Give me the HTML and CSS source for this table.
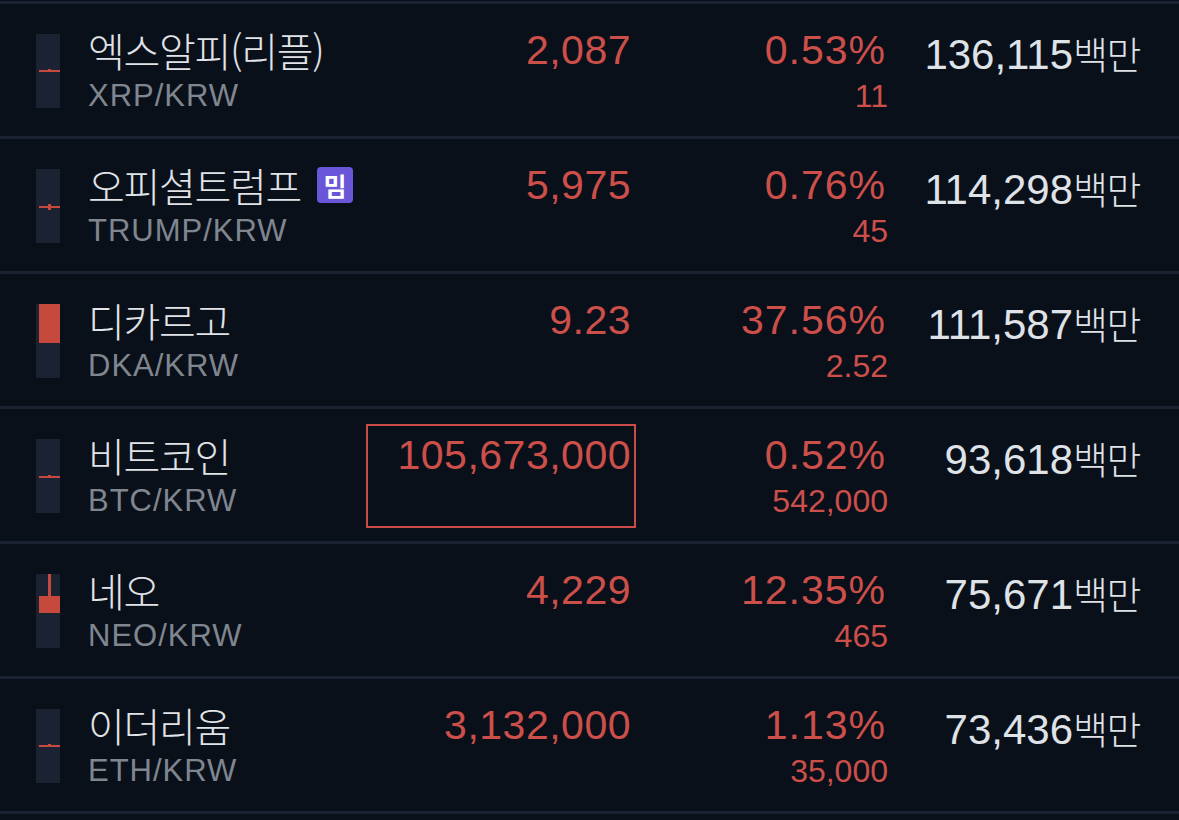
FILE: index.html
```html
<!DOCTYPE html>
<html lang="ko">
<head>
<meta charset="utf-8">
<title>KRW 마켓</title>
<link rel="stylesheet" href="styles.css">
</head>
<body>
<div class="list">
  <div class="row">
    <div class="candle"><svg width="24" height="74" viewBox="0 0 24 74"><rect x="3" y="36" width="21" height="2"/><rect x="12" y="35" width="3" height="1"/></svg></div>
    <div class="coin">
      <div class="name">엑스알피(리플)</div>
      <div class="pair">XRP/KRW</div>
    </div>
    <div class="price">2,087</div>
    <div class="change">
      <div class="pct">0.53%</div>
      <div class="diff">11</div>
    </div>
    <div class="volume">136,115<span class="unit">백만</span></div>
  </div>
  <div class="row">
    <div class="candle"><svg width="24" height="74" viewBox="0 0 24 74"><rect x="3" y="37" width="21" height="2"/><rect x="12" y="35" width="3" height="6"/></svg></div>
    <div class="coin">
      <div class="name">오피셜트럼프<span class="badge">밈</span></div>
      <div class="pair">TRUMP/KRW</div>
    </div>
    <div class="price">5,975</div>
    <div class="change">
      <div class="pct">0.76%</div>
      <div class="diff">45</div>
    </div>
    <div class="volume">114,298<span class="unit">백만</span></div>
  </div>
  <div class="row">
    <div class="candle"><svg width="24" height="74" viewBox="0 0 24 74"><rect x="3" y="0" width="21" height="39"/></svg></div>
    <div class="coin">
      <div class="name">디카르고</div>
      <div class="pair">DKA/KRW</div>
    </div>
    <div class="price">9.23</div>
    <div class="change">
      <div class="pct">37.56%</div>
      <div class="diff">2.52</div>
    </div>
    <div class="volume">111,587<span class="unit">백만</span></div>
  </div>
  <div class="row">
    <div class="candle"><svg width="24" height="74" viewBox="0 0 24 74"><rect x="3" y="37" width="21" height="2"/><rect x="12" y="36" width="3" height="1"/></svg></div>
    <div class="coin">
      <div class="name">비트코인</div>
      <div class="pair">BTC/KRW</div>
    </div>
    <div class="price price-active">105,673,000</div>
    <div class="change">
      <div class="pct">0.52%</div>
      <div class="diff">542,000</div>
    </div>
    <div class="volume">93,618<span class="unit">백만</span></div>
  </div>
  <div class="row">
    <div class="candle"><svg width="24" height="74" viewBox="0 0 24 74"><rect x="12" y="0" width="3" height="22"/><rect x="3" y="22" width="21" height="17"/></svg></div>
    <div class="coin">
      <div class="name">네오</div>
      <div class="pair">NEO/KRW</div>
    </div>
    <div class="price">4,229</div>
    <div class="change">
      <div class="pct">12.35%</div>
      <div class="diff">465</div>
    </div>
    <div class="volume">75,671<span class="unit">백만</span></div>
  </div>
  <div class="row">
    <div class="candle"><svg width="24" height="74" viewBox="0 0 24 74"><rect x="3" y="36" width="21" height="2"/><rect x="12" y="35" width="3" height="1"/></svg></div>
    <div class="coin">
      <div class="name">이더리움</div>
      <div class="pair">ETH/KRW</div>
    </div>
    <div class="price">3,132,000</div>
    <div class="change">
      <div class="pct">1.13%</div>
      <div class="diff">35,000</div>
    </div>
    <div class="volume">73,436<span class="unit">백만</span></div>
  </div>
</div>
</body>
</html>
```

FILE: styles.css
```css
html, body {
  margin: 0;
  padding: 0;
  background: #0a101a;
}

body {
  width: 1179px;
  height: 820px;
  overflow: hidden;
  font-family: "Liberation Sans", "Noto Sans CJK KR", sans-serif;
  color: #dfe2e6;
}

.list {
  margin-top: 1px;
  border-top: 3px solid #1a2130;
}

.row {
  display: flex;
  align-items: flex-start;
  height: 132px;
  padding-left: 36px;
  border-bottom: 3px solid #1a2130;
}

.candle {
  flex-shrink: 0;
  width: 24px;
  height: 74px;
  margin-top: 30px;
  background: #1b2232;
}

.candle svg {
  display: block;
  fill: #c6493e;
}

.coin {
  flex-shrink: 0;
  width: 278px;
  margin-left: 28px;
  margin-top: 24px;
}

.name {
  display: flex;
  align-items: center;
  height: 44px;
  font-family: "Noto Sans CJK KR", "Liberation Sans", sans-serif;
  font-size: 40px;
  font-weight: 300;
  letter-spacing: -1.3px;
  line-height: 44px;
  color: #e0e3e7;
  white-space: nowrap;
}

.badge {
  display: inline-flex;
  align-items: center;
  justify-content: center;
  width: 36px;
  height: 36px;
  margin-left: 16px;
  border-radius: 4px;
  background: #6a56d8;
  color: #ffffff;
  font-size: 25px;
  font-weight: 700;
  letter-spacing: 0;
  line-height: 1;
}

.pair {
  margin-top: 7px;
  font-size: 31px;
  letter-spacing: 1px;
  line-height: 34px;
  color: #80868f;
  white-space: nowrap;
}

.price {
  flex-shrink: 0;
  box-sizing: border-box;
  width: 270px;
  height: 104px;
  margin-top: 15px;
  padding: 6px 3px 0 0;
  border: 2px solid transparent;
  text-align: right;
  font-size: 41px;
  letter-spacing: 0.5px;
  line-height: 47px;
  color: #cc4f4a;
}

.price-active {
  border-color: #c94c46;
}

.change {
  flex-shrink: 0;
  width: 252px;
  margin-top: 23px;
  text-align: right;
  color: #cc4f4a;
}

.pct {
  margin-right: 2px;
  font-size: 41px;
  letter-spacing: 1px;
  line-height: 47px;
}

.diff {
  margin-top: 4px;
  font-size: 32px;
  line-height: 37px;
}

.volume {
  flex-shrink: 0;
  width: 252px;
  margin-top: 25px;
  text-align: right;
  font-size: 42px;
  line-height: 47px;
  color: #dfe2e6;
  white-space: nowrap;
}

.unit {
  font-family: "Noto Sans CJK KR", sans-serif;
  font-size: 38px;
  font-weight: 300;
  letter-spacing: -1.5px;
}
```
